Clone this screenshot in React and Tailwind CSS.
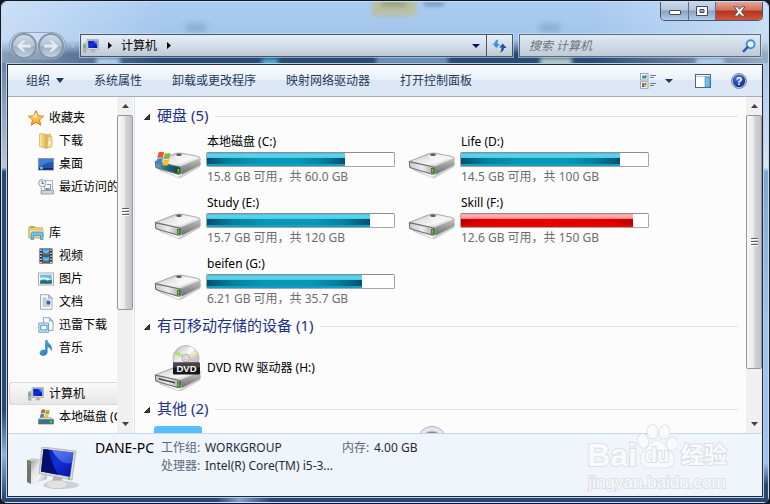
import React from "react";

function Defs() {
  return (
    <svg width="0" height="0" className="absolute" aria-hidden="true">
      <defs>
        <linearGradient id="metalTop" x1="0" y1="0" x2="1" y2="1">
          <stop offset="0" stopColor="#9a9a9a" />
          <stop offset=".35" stopColor="#e4e4e4" />
          <stop offset=".6" stopColor="#f4f4f4" />
          <stop offset="1" stopColor="#a0a0a0" />
        </linearGradient>
        <linearGradient id="metalSide" x1="0" y1="0" x2="0" y2="1">
          <stop offset="0" stopColor="#c4c4c4" />
          <stop offset="1" stopColor="#6c6c6c" />
        </linearGradient>
        <linearGradient id="metalFront" x1="0" y1="0" x2="1" y2="0">
          <stop offset="0" stopColor="#c9c9cf" />
          <stop offset=".5" stopColor="#ececf3" />
          <stop offset="1" stopColor="#a9a9a9" />
        </linearGradient>
        <linearGradient id="tealFront" x1="0" y1="0" x2="1" y2="0">
          <stop offset="0" stopColor="#7fa4b4" />
          <stop offset=".4" stopColor="#1f6f8b" />
          <stop offset="1" stopColor="#123f48" />
        </linearGradient>
        <linearGradient id="screenBlue" x1="0" y1="0" x2="1" y2="1">
          <stop offset="0" stopColor="#0a1fa0" />
          <stop offset=".5" stopColor="#1030d8" />
          <stop offset="1" stopColor="#0414a0" />
        </linearGradient>
        <linearGradient id="glare" x1="0" y1="0" x2="1" y2="1">
          <stop offset="0" stopColor="#7f9cf4" />
          <stop offset="1" stopColor="#2f55e0" />
        </linearGradient>
        <linearGradient id="folderGold" x1="0" y1="0" x2="1" y2="0">
          <stop offset="0" stopColor="#f8eaa4" />
          <stop offset="1" stopColor="#dfb64f" />
        </linearGradient>
        <linearGradient id="starGold" x1="0" y1="0" x2="0" y2="1">
          <stop offset="0" stopColor="#fff09a" />
          <stop offset="1" stopColor="#f79a1c" />
        </linearGradient>
        <linearGradient id="noteBlue" x1="0" y1="0" x2="1" y2="1">
          <stop offset="0" stopColor="#5cbcf4" />
          <stop offset="1" stopColor="#0f6cb4" />
        </linearGradient>
        <radialGradient id="helpBlue" cx=".4" cy=".3" r=".8">
          <stop offset="0" stopColor="#5c86e8" />
          <stop offset=".5" stopColor="#2348c0" />
          <stop offset="1" stopColor="#0a2480" />
        </radialGradient>
        <linearGradient id="disc" x1="0" y1="0" x2="1" y2="1">
          <stop offset="0" stopColor="#b8b8b8" />
          <stop offset=".4" stopColor="#efefef" />
          <stop offset=".7" stopColor="#c8c8c8" />
          <stop offset="1" stopColor="#dcdcdc" />
        </linearGradient>
      </defs>
    </svg>
  );
}

function FlagShapes() {
  return (
    <>
      <path d="M3 1C5 0 7 0 8.500 1L7.300 6.600C5.600 5.800 3.900 5.800 1.800 6.800Z" fill="#e2562c" />
      <path d="M9.300 1.400C11 2.300 13 2.200 15 1.300L13.900 7C12 7.800 10 7.800 8.200 7Z" fill="#83b93c" />
      <path d="M1.600 7.600C3.600 6.600 5.500 6.700 7.100 7.400L6 13C4.300 12.200 2.500 12.200 .4 13.200Z" fill="#3b86cf" />
      <path d="M8 7.900C9.700 8.700 11.700 8.700 13.700 7.800L12.600 13.400C10.700 14.300 8.700 14.200 6.900 13.400Z" fill="#f6c02c" />
    </>
  );
}

function DriveBody({ system, slot }) {
  return (
    <>
      <path d="M4 20L24 29L47 14L46 19L26 30.500L6 23Z" fill="#000" opacity=".18" />
      <path d="M1 13.500L20 6Q24 4.600 28 5.200L44 8.500Q47 9.500 46 11.500L28 18.500Q26 19.500 23.500 19L3 15Z" fill="url(#metalTop)" stroke="#8b8b8b" strokeWidth=".7" />
      <path d="M20 8.500C26 6 34 6.500 40 9C36 12 31 15 26 16C24 12.500 22 10 20 8.500Z" fill="#fff" opacity=".4" />
      <ellipse cx="25" cy="6.800" rx="2.800" ry="1.300" fill="#5a5a5a" />
      <path d="M27 18.500L46.500 10V17L27.500 26.500Z" fill="url(#metalSide)" />
      <path d="M1 13Q.6 12.500 1 15V18Q1 20 3 20.600L24 26.700Q27 27.300 27.500 25V20Q27 18.500 25 18.300L4 13.600Q2 13 1 13Z" fill="#6f6f6f" />
      <path d="M2 14.600L24.500 19.300Q26 19.700 26 21V24Q26 25.800 24 25.400L4 19.700Q2 19 2 17.500Z" fill={system ? "url(#tealFront)" : "url(#metalFront)"} />
      {slot && <path d="M4.500 16.400L21 20.600V22L4.500 17.900Z" fill="#3c3c3c" />}
      <path d="M23 20.200H25.800V25H23Z" fill="#1d5a10" />
      <path d="M23.600 20.800H25.200V24.600H23.600Z" fill="#56dc1c" />
    </>
  );
}

function DriveIcon({ system }) {
  return (
    <svg width="48" height="32" viewBox="0 0 48 32" className="shrink-0" aria-hidden="true">
      <DriveBody system={system} />
      {system && (
        <g transform="translate(1.500 3.500)">
          <FlagShapes />
        </g>
      )}
    </svg>
  );
}

function DvdIcon() {
  return (
    <svg width="48" height="46" viewBox="0 0 48 46" className="shrink-0" aria-hidden="true">
      <g transform="translate(0 16.500)">
        <DriveBody slot />
      </g>
      <circle cx="32" cy="13.500" r="13" fill="url(#disc)" stroke="#a2a2a2" strokeWidth=".7" />
      <path d="M32 13.500L20 9L22.500 5Z" fill="#a4e05c" opacity=".8" />
      <path d="M32 13.500L41 4.500L44 9Z" fill="#f4e6b0" opacity=".8" />
      <path d="M32 13.500L36 1L41 4Z" fill="#fff" opacity=".7" />
      <path d="M32 13.500L44.500 15L44 18Z" fill="#f0a8d4" opacity=".8" />
      <circle cx="32" cy="13" r="4" fill="#dcdcdc" stroke="#aaa" strokeWidth=".8" />
      <circle cx="32" cy="13" r="1.500" fill="#fff" stroke="#999" strokeWidth=".5" />
      <rect x="19" y="17.500" width="27" height="12" rx="1" fill="#161616" />
      <rect x="19" y="17.500" width="27" height="5" fill="#5a5a5a" opacity=".7" />
      <text x="32.500" y="27" textAnchor="middle" fontSize="9.500" fontWeight="700" fontFamily="Liberation Sans, sans-serif" fill="#fff">DVD</text>
    </svg>
  );
}

function Svg16({ children }) {
  return (
    <svg width="16" height="16" viewBox="0 0 16 16" className="shrink-0" aria-hidden="true">
      {children}
    </svg>
  );
}

function ComputerIcon() {
  return (
    <Svg16>
      <path d="M.5 6L3 5.500V14.500L.5 14Z" fill="#b6bcb8" stroke="#858c88" strokeWidth=".5" />
      <rect x=".8" y="7" width="1.400" height="3" fill="#4cc030" />
      <path d="M4 1.500H15.500V11.500H4Z" fill="#d8d8d8" stroke="#9a9a9a" strokeWidth=".6" />
      <path d="M5.200 2.700H14.300V10H5.200Z" fill="url(#screenBlue)" />
      <path d="M10 2.700H14.300V7Z" fill="#6c8cf0" />
      <path d="M8.500 11.500H11.500V13L13.500 14.300H6.500L8.500 13Z" fill="#b0b0b0" />
    </Svg16>
  );
}
function StarIcon() {
  return (
    <Svg16>
      <path d="M8 .7L10.200 5.700L15.600 6.200L11.500 9.800L12.800 15.200L8 12.400L3.200 15.200L4.500 9.800L.4 6.200L5.800 5.700Z" fill="url(#starGold)" stroke="#e2791c" strokeWidth="1" strokeLinejoin="round" />
      <path d="M8 3L9.200 6.500L7 7.500L4 7Z" fill="#fff" opacity=".5" />
    </Svg16>
  );
}
function FolderIcon() {
  return (
    <Svg16>
      <path d="M7 2L12.500 1V14L7 15Z" fill="#e5c568" stroke="#c29b3e" strokeWidth=".5" />
      <path d="M9.500 4L14 3.500V13.500L9 15Z" fill="#f2dc8e" stroke="#c9a349" strokeWidth=".5" />
      <path d="M1.500 1L5 .6L8.500 2V15.500L1.500 13.500Z" fill="url(#folderGold)" stroke="#c9a349" strokeWidth=".6" />
      <path d="M10.500 8.500H12.500V11.500H10.500Z" fill="#fff" opacity=".8" />
    </Svg16>
  );
}
function DesktopIcon() {
  return (
    <Svg16>
      <rect x=".5" y="2.500" width="15" height="11.500" fill="#1b58b0" stroke="#8a94a0" />
      <path d="M1 3H15V6C10 6 6 8 1 11Z" fill="#3f80d6" />
      <rect x="1" y="12" width="14" height="1.800" fill="#142e60" />
      <circle cx="3.500" cy="12" r="1.600" fill="#58b8e8" />
      <circle cx="3.500" cy="12" r=".7" fill="#f5d040" />
    </Svg16>
  );
}
function RecentIcon() {
  return (
    <Svg16>
      <path d="M6.500 1.500H14.500V13H6.500Z" fill="#f3f5f7" stroke="#9ba1a8" strokeWidth=".8" />
      <path d="M7.500 9H11.500V12H7.500Z" fill="#6795c4" />
      <path d="M12.500 5V11M9 5.500H12" stroke="#8a98a8" />
      <path d="M3 11.500H15.500V15H3Z" fill="#d2d5d8" stroke="#8e9498" strokeWidth=".8" />
      <circle cx="4.200" cy="4.200" r="3.600" fill="#eef1f4" stroke="#9198a0" strokeWidth=".9" />
      <path d="M4.200 2V4.500H6" stroke="#4d5a68" fill="none" strokeWidth=".9" />
      <path d="M3 8.500Q3 12 5.500 12" stroke="#999" fill="none" />
    </Svg16>
  );
}
function LibraryIcon() {
  return (
    <Svg16>
      <path d="M.7 13V2.500L2 1.500H7L8 2.700H14.500V13Z" fill="#ecd27a" stroke="#c8a344" strokeWidth=".7" />
      <path d="M2 1.700H6.500V3H2Z" fill="#77b84c" />
      <path d="M1.500 5H15.300V12H1.500Z" fill="#f8e9ad" stroke="#cfae54" strokeWidth=".6" />
      <path d="M3 14.500V9Q3 7 5 7H13Q15 7 15 9V14.500H12.500V10.500H5.500V14.500Z" fill="#72c2ea" stroke="#2f8abc" strokeWidth=".7" />
    </Svg16>
  );
}
function VideoIcon() {
  return (
    <Svg16>
      <rect x="1.500" y=".5" width="13" height="15" fill="#22262c" />
      <rect x="4.500" y="1" width="7" height="6.500" fill="#3a9ed8" />
      <rect x="4.500" y="8.500" width="7" height="6.500" fill="#3a9ed8" />
      <path d="M4.500 6Q7 5 9 6L11.500 5V7.500H4.500ZM4.500 13.500Q7 12.500 9 13.500L11.500 12.500V15H4.500Z" fill="#8a4a3c" />
      <path d="M5 2L8 4.500L11 2M5 9.500L8 12L11 9.500" stroke="#8fdcfa" fill="none" />
      <path d="M3 1.500V15M13 1.500V15" stroke="#fff" strokeWidth="1.400" strokeDasharray="1.500 1.500" />
    </Svg16>
  );
}
function PictureIcon() {
  return (
    <Svg16>
      <rect x=".6" y="2" width="14.800" height="12" fill="#fff" stroke="#8d9399" strokeWidth=".8" />
      <rect x="2.200" y="3.600" width="11.600" height="8.800" fill="#6bbbe8" />
      <path d="M2.200 7Q6 5 13.800 8.500V10H2.200Z" fill="#d9f1f6" />
      <path d="M2.200 9.500Q6 7.500 9 9.500L13.800 8.500V12.400H2.200Z" fill="#2e8552" />
      <path d="M2.200 11Q8 9.800 13.800 11V12.400H2.200Z" fill="#2060a0" />
    </Svg16>
  );
}
function DocumentIcon() {
  return (
    <Svg16>
      <path d="M2.500 .7H10.500L14 4.200V15.300H2.500Z" fill="#fcfdff" stroke="#8a929c" strokeWidth=".8" />
      <path d="M10.500 .7V4.200H14Z" fill="#d6dde6" stroke="#8a929c" strokeWidth=".7" />
      <path d="M4.500 4H8.500M4.500 6H12M4.500 8H8M4.500 10H8M4.500 12H12" stroke="#8595ad" strokeWidth=".9" />
      <rect x="8.500" y="7" width="3.800" height="3.600" fill="#2b62b6" />
    </Svg16>
  );
}
function ThunderDownloadIcon() {
  return (
    <Svg16>
      <path d="M5.500 .7H11.500L15 4.200V13.500H5.500Z" fill="#f5fafe" stroke="#7f93a6" strokeWidth=".8" />
      <path d="M11.500 .7V4.200H15Z" fill="#cfe0ee" stroke="#7f93a6" strokeWidth=".7" />
      <path d="M.8 6H10.500V15.300H.8Z" fill="#d6ebfa" stroke="#5b9bce" strokeWidth=".9" />
      <path d="M2.800 8.200H9V13H2.800Z" fill="#fff" stroke="#3f8bc8" />
    </Svg16>
  );
}
function MusicIcon() {
  return (
    <Svg16>
      <path d="M7.500 .5H9.200C9.500 4 14.500 4.500 13.500 10.500C12.500 8 11 7 9.200 6.800V12C9.200 14.500 6.800 15.700 4.500 15.500C2 15.200 1.200 13.200 2.500 11.500C3.700 10 5.800 9.700 7.500 10.500Z" fill="url(#noteBlue)" stroke="#1a6dad" strokeWidth=".5" />
    </Svg16>
  );
}
function SystemDiskIcon() {
  return (
    <Svg16>
      <path d="M.5 10.500L2.500 8.500H13.500L15.500 10.500V15H.5Z" fill="#3d7484" stroke="#66707a" strokeWidth=".7" />
      <path d="M.7 10.300L2.700 8.300H13.300L15.300 10.300Z" fill="#d7dadc" />
      <rect x="12" y="11.800" width="2" height="2" fill="#58e028" />
      <g transform="translate(1.500 0) scale(.68)">
        <FlagShapes />
      </g>
    </Svg16>
  );
}

function LargeComputerIcon() {
  return (
    <svg width="52" height="44" viewBox="0 0 52 44" className="shrink-0" aria-hidden="true">
      <ellipse cx="34" cy="38" rx="18" ry="4" fill="#000" opacity=".14" />
      <path d="M0 13L5 11L20 13V32L5 37L0 35Z" fill="#cfcfcf" />
      <path d="M0 13L4 14V37L0 35Z" fill="#6f7472" />
      <path d="M4 14L20 12V32L4 37Z" fill="url(#metalTop)" />
      <path d="M1.300 15L2.800 15.500V18L1.300 17.500Z" fill="#4bc22c" />
      <path d="M27 28L35 30L36 37H24Z" fill="#b4b4b4" />
      <ellipse cx="30" cy="37.500" rx="11" ry="4.200" fill="#e2e2e2" stroke="#b8b8b8" strokeWidth=".6" />
      <path d="M15 0L49 4L45 33L12 26.500Z" fill="#dadada" stroke="#a5a5a5" strokeWidth=".7" />
      <path d="M16.500 2L46.500 5.500L43 30L14 24.500Z" fill="url(#screenBlue)" />
      <path d="M16.500 2L22 2.700C23 10 26 19 31 27.700L14 24.500Z" fill="#060e70" />
      <path d="M25 3L46.500 5.500L45 16C38 18 31 14 25 3Z" fill="url(#glare)" opacity=".75" />
      <circle cx="42" cy="31.500" r=".9" fill="#3cc030" />
    </svg>
  );
}

function Triangle({ className, dir = "down", w = 8, h = 4 }) {
  const points =
    dir === "down" ? `0,0 ${w},0 ${w / 2},${h}` : dir === "up" ? `0,${h} ${w},${h} ${w / 2},0` : `0,0 ${w},${h / 2} 0,${h}`;
  return (
    <svg width={w} height={h} viewBox={`0 0 ${w} ${h}`} className={className} aria-hidden="true">
      <polygon points={points} fill="currentColor" />
    </svg>
  );
}

function NavArrow({ flip }) {
  return (
    <svg width="18" height="18" viewBox="0 0 18 18" className={flip ? "rotate-180" : ""} aria-hidden="true">
      <path d="M1.500 9L8 3H11L7.500 7.300H16V10.700H7.500L11 15H8Z" fill="#e6edf4" stroke="#b4c2d0" strokeWidth=".6" />
    </svg>
  );
}

function TitleBar() {
  const base = "flex h-[18px] items-center justify-center";
  const round =
    "flex size-[26px] items-center justify-center rounded-full border-2 border-[#8595a9] bg-[linear-gradient(180deg,#cfdbe8_0%,#b3c2d2_48%,#9dafc3_52%,#c2d0df_100%)]";
  return (
    <header className="relative flex h-[61px] flex-col overflow-hidden rounded-t-[5px] bg-[linear-gradient(180deg,#abcdf2_0px,#a2c4ea_38px,#5c82ac_46px,#25476f_52px,#2a4d76_61px)]">
      <div aria-hidden="true" className="absolute inset-y-0 left-0 w-40 bg-[linear-gradient(90deg,rgba(235,243,252,0.5),rgba(235,243,252,0))]" />
      <div aria-hidden="true" className="absolute inset-y-0 right-0 w-44 bg-[linear-gradient(270deg,rgba(226,237,250,0.6),rgba(226,237,250,0))]" />
      <i aria-hidden="true" className="absolute top-[22px] left-[184px] h-2 w-5 bg-[#6e8fb5]/50 blur-[3px]" />
      <i aria-hidden="true" className="absolute top-[22px] left-[538px] h-2 w-5 bg-[#6e8fb5]/50 blur-[3px]" />
      <i aria-hidden="true" className="absolute -top-1 left-[370px] h-[18px] w-[44px] bg-[#b9bfa2] blur-[2px]" />
      <i aria-hidden="true" className="absolute top-0 left-[380px] h-1 w-6 bg-[#8f9b72] blur-[2px]" />
      <i aria-hidden="true" className="absolute top-0 left-[422px] h-1 w-5 bg-[#6e8fb5] blur-[2px]" />
      <i aria-hidden="true" className="absolute top-[56px] left-[94px] h-2 w-6 bg-[#b0d0f4] blur-[2px]" />
      <i aria-hidden="true" className="absolute top-[57px] left-[260px] h-2 w-4 bg-[#4fb4dc] blur-[2px]" />
      <i aria-hidden="true" className="absolute top-[53px] left-[374px] h-3 w-[72px] bg-[#6a90bd] blur-[2px]" />
      <i aria-hidden="true" className="absolute top-[56px] left-[538px] h-2 w-8 bg-[#b6cfc4] blur-[2px]" />
      <i aria-hidden="true" className="absolute top-[56px] left-[694px] h-2 w-7 bg-[#b0d0f4] blur-[2px]" />

      <div className="relative flex justify-end pr-[5px]">
        <div className="flex overflow-hidden rounded-b-[5px] border-x border-b border-[#44546c] text-[#3f4a5c]">
          <button type="button" aria-label="最小化" className={`${base} w-7 border-r border-[#5c6c84] bg-[linear-gradient(180deg,#c8d8ec_0%,#b4c6dd_45%,#8ba1bf_50%,#b4cbe8_100%)]`}>
            <svg width="12" height="6" viewBox="0 0 12 6" className="mt-1" aria-hidden="true">
              <rect x=".5" y=".5" width="11" height="4" rx=".5" fill="#fff" stroke="currentColor" />
            </svg>
          </button>
          <button type="button" aria-label="最大化" className={`${base} w-[27px] border-r border-[#5c6c84] bg-[linear-gradient(180deg,#c8d8ec_0%,#b4c6dd_45%,#8ba1bf_50%,#b4cbe8_100%)]`}>
            <svg width="12" height="10" viewBox="0 0 12 10" aria-hidden="true">
              <path fillRule="evenodd" d="M.5 .5H11.500V9.500H.5ZM4 3.500V6.500H8V3.500Z" fill="#fff" stroke="currentColor" />
            </svg>
          </button>
          <button type="button" aria-label="关闭" className={`${base} w-[46px] bg-[linear-gradient(180deg,#e2a596_0%,#d2705c_45%,#b5331c_50%,#d0583c_100%)]`}>
            <svg width="13" height="11" viewBox="0 0 13 11" aria-hidden="true">
              <path d="M1 .8H4.300L6.500 3.300L8.700 .8H12L8.300 5.500L12 10.200H8.700L6.500 7.700L4.300 10.200H1L4.700 5.500Z" fill="#fff" stroke="currentColor" strokeWidth=".9" />
            </svg>
          </button>
        </div>
      </div>

      <div className="relative mt-[13px] flex h-[23px] items-center gap-[3px] pr-[7px] pl-[7px]">
        <div className="flex items-center gap-px rounded-full border border-[#7d8fa6]/70 bg-white/20 px-px">
          <button type="button" aria-label="后退" className={round}>
            <NavArrow />
          </button>
          <button type="button" aria-label="前进" className={round}>
            <NavArrow flip />
          </button>
        </div>
        <button type="button" aria-label="最近页面" className="flex h-5 w-2 items-center justify-center text-[#a9bdd3]">
          <Triangle w={8} h={5} />
        </button>
        <div className="flex h-[23px] min-w-0 flex-1 border border-[#46566a] bg-[linear-gradient(180deg,#e6eef6_0%,#d5dfe9_50%,#bdc7d2_100%)] shadow-[0_0_0_1px_rgba(220,232,245,0.55)]">
          <div className="flex flex-1 items-center pl-0.5">
            <ComputerIcon />
            <button type="button" aria-label="展开" className="flex w-[22px] justify-center">
              <Triangle dir="right" w={4} h={7} />
            </button>
            <button type="button">计算机</button>
            <button type="button" aria-label="展开计算机" className="flex w-6 justify-center">
              <Triangle dir="right" w={4} h={7} />
            </button>
          </div>
          <button type="button" aria-label="历史记录" className="flex w-5 items-center justify-center text-[#0a1060]">
            <Triangle w={8} h={4} />
          </button>
          <button type="button" aria-label="刷新" className="flex w-[26px] items-center justify-center border-l border-[#46566a]">
            <svg width="15" height="14" viewBox="0 0 15 14" aria-hidden="true">
              <path d="M6.500 .5C4 .8 2.700 2.500 2.700 4.500H.3L4.300 9L8 5H5.700C5.700 3 5.800 1.800 6.500 .5Z" fill="#3f93d8" />
              <path d="M8 13.500C10.500 13.200 12 11.500 12 9H14.700L10.800 4.500L7.100 8.500H9.300C9.300 11 9 12.300 8 13.500Z" fill="#2556a4" />
            </svg>
          </button>
        </div>
        <label className="ml-[3px] flex h-[23px] w-[242px] shrink-0 items-center border border-[#5c6b7e] bg-[linear-gradient(180deg,#dfe9f4_0%,#d0dbe6_50%,#bfcad6_100%)] pr-1 pl-[9px] shadow-[0_0_0_1px_rgba(220,232,245,0.55)]">
          <input type="search" aria-label="搜索 计算机" placeholder="搜索 计算机" className="min-w-0 flex-1 bg-transparent italic outline-none placeholder:text-[#6c7178]" />
          <svg width="14" height="14" viewBox="0 0 14 14" aria-hidden="true">
            <circle cx="8.600" cy="5.200" r="4" fill="#e4f1fb" stroke="#3f93d2" strokeWidth="1.900" />
            <path d="M5.600 8.200L1.700 12.200" stroke="#2a5cae" strokeWidth="2.400" strokeLinecap="round" />
          </svg>
        </label>
      </div>
    </header>
  );
}

function CommandBar() {
  return (
    <div className="flex h-8 shrink-0 items-center border-b border-[#a0afc3] bg-[linear-gradient(180deg,#fbfdff_0%,#e8f0fa_48%,#dce6f4_50%,#dde8f6_100%)] pr-[15px] pl-[18px] text-[#1e395b]">
      <nav aria-label="命令" className="flex flex-1 gap-[30px]">
        <button type="button" className="flex items-center gap-1.5">
          组织
          <Triangle w={8} h={5} />
        </button>
        <button type="button">系统属性</button>
        <button type="button">卸载或更改程序</button>
        <button type="button">映射网络驱动器</button>
        <button type="button">打开控制面板</button>
      </nav>
      <button type="button" aria-label="更改视图">
        <svg width="16" height="16" viewBox="0 0 16 16" aria-hidden="true">
          <rect x=".5" y=".5" width="7.500" height="6.500" fill="#fff" stroke="#9aa3ad" />
          <rect x="2" y="2" width="4.500" height="3.500" fill="#2a8f9a" />
          <path d="M2 2H6.500L2 4Z" fill="#7fd0e8" />
          <rect x=".5" y="8.800" width="7.500" height="6.500" fill="#fff" stroke="#9aa3ad" />
          <rect x="2" y="10.200" width="2.200" height="2" fill="#d8402a" />
          <rect x="4.200" y="10.200" width="2.300" height="2" fill="#3c9a3c" />
          <rect x="2" y="12.200" width="2.200" height="1.800" fill="#2b5cc0" />
          <rect x="4.200" y="12.200" width="2.300" height="1.800" fill="#e8b82a" />
          <path d="M10 2.500H16M10 4.500H14M10 10.500H16M10 12.500H14" stroke="#6c7f9a" />
        </svg>
      </button>
      <button type="button" aria-label="更多选项" className="ml-[9px]">
        <Triangle w={8} h={4} />
      </button>
      <button type="button" aria-label="显示预览窗格" className="ml-[22px]">
        <svg width="16" height="14" viewBox="0 0 16 14" aria-hidden="true">
          <rect x=".5" y=".5" width="15" height="13" fill="#fff" stroke="#4c6484" />
          <path d="M1 2.500H15" stroke="#b9c7d8" />
          <rect x="10" y="3" width="5" height="10" fill="#6cc0e2" stroke="#4a84a8" strokeWidth=".6" />
        </svg>
      </button>
      <button type="button" aria-label="获取帮助" className="ml-5">
        <svg width="16" height="16" viewBox="0 0 16 16" aria-hidden="true">
          <circle cx="8" cy="8" r="7.500" fill="#c9cdd4" stroke="#767f8c" strokeWidth=".9" />
          <circle cx="8" cy="8" r="6.200" fill="url(#helpBlue)" />
          <text x="8" y="12" textAnchor="middle" fontSize="11" fontWeight="700" fontFamily="Liberation Sans, sans-serif" fill="#fff">?</text>
        </svg>
      </button>
    </div>
  );
}

const favorites = [
  ["下载", FolderIcon],
  ["桌面", DesktopIcon],
  ["最近访问的位置", RecentIcon],
];
const libraries = [
  ["视频", VideoIcon],
  ["图片", PictureIcon],
  ["文档", DocumentIcon],
  ["迅雷下载", ThunderDownloadIcon],
  ["音乐", MusicIcon],
];
const disks = [["本地磁盘 (C:)", SystemDiskIcon]];

function TreeGroup({ label, icon: Icon, items, selected }) {
  return (
    <li>
      <a href="#" className={`ml-px flex h-[23px] items-center gap-[5px] border pl-[18px] ${selected ? "rounded-l-[3px] border-r-0 border-[#d9d9d9] bg-[linear-gradient(180deg,#fafafa,#e6e6e6)]" : "border-transparent"}`}>
        <Icon />
        {label}
      </a>
      <ul>
        {items.map(([name, ItemIcon]) => (
          <li key={name}>
            <a href="#" className="flex h-[23px] items-center gap-[5px] pl-[30px]">
              <ItemIcon />
              {name}
            </a>
          </li>
        ))}
      </ul>
    </li>
  );
}

function Scrollbar({ thumb, rest }) {
  return (
    <div aria-hidden="true" className="flex w-4 shrink-0 flex-col bg-[#f0f0f0] text-[#404040]">
      <div className="flex h-[18px] shrink-0 items-center justify-center">
        <Triangle dir="up" w={7} h={4} />
      </div>
      <div className="flex items-center justify-center rounded-[2px] border border-[#979797] bg-[linear-gradient(90deg,#f7f7f7_0%,#ebebeb_45%,#d4d4d7_55%,#c2c3c7_100%)]" style={{ flexGrow: thumb, flexBasis: 0 }}>
        <div className="flex flex-col gap-px">
          <i className="h-0.5 w-[7px] border-b border-white bg-[#606060]" />
          <i className="h-0.5 w-[7px] border-b border-white bg-[#606060]" />
          <i className="h-0.5 w-[7px] border-b border-white bg-[#606060]" />
        </div>
      </div>
      <div style={{ flexGrow: rest, flexBasis: 0 }} />
      <div className="flex h-[18px] shrink-0 items-center justify-center">
        <Triangle w={7} h={4} />
      </div>
    </div>
  );
}

function Sidebar() {
  return (
    <aside className="flex w-[127px] shrink-0 border-r border-[#d6e5f5]">
      <nav aria-label="导航窗格" className="min-w-0 flex-1 overflow-hidden whitespace-nowrap">
        <ul className="flex flex-col gap-[23px] pt-[9px]">
          <TreeGroup label="收藏夹" icon={StarIcon} items={favorites} />
          <TreeGroup label="库" icon={LibraryIcon} items={libraries} />
          <TreeGroup label="计算机" icon={ComputerIcon} items={disks} selected />
        </ul>
      </nav>
      <Scrollbar thumb={194} rest={106} />
      <div className="w-px bg-[#fcfcfc]" />
    </aside>
  );
}

const drives = [
  { name: "本地磁盘 (C:)", detail: "15.8 GB 可用，共 60.0 GB", used: 74, system: true },
  { name: "Life (D:)", detail: "14.5 GB 可用，共 100 GB", used: 85 },
  { name: "Study (E:)", detail: "15.7 GB 可用，共 120 GB", used: 87 },
  { name: "Skill (F:)", detail: "12.6 GB 可用，共 150 GB", used: 92, full: true },
  { name: "beifen (G:)", detail: "6.21 GB 可用，共 35.7 GB", used: 83 },
];

function SectionHeading({ children }) {
  return (
    <h2 className="flex h-[27px] items-center gap-[7px] text-[15px] text-[#1e3287]">
      <svg width="6" height="6" viewBox="0 0 6 6" aria-hidden="true">
        <path d="M5.500 .5V5.500H.5Z" fill="#404040" stroke="#262626" />
      </svg>
      <span className="pb-[3px]">{children}</span>
      <span className="h-px flex-1 bg-[#e0e2e4]" />
    </h2>
  );
}

function Drive({ name, detail, used, system, full }) {
  return (
    <li className="flex h-[61px] gap-1 pt-1 pl-2.5">
      <div className="pt-3.5">
        <DriveIcon system={system} />
      </div>
      <div className="w-[189px] leading-4">
        <div className="px-px text-black">{name}</div>
        <div role="progressbar" aria-label={name} aria-valuenow={used} className="my-0.5 h-[15px] rounded-[2px] border border-[#a6a6a6] border-t-[#8d8d8d] bg-white">
          <div className="flex h-full flex-col" style={{ width: `${used}%` }}>
            <div
              className={
                full
                  ? "h-[5px] bg-[linear-gradient(180deg,#ff9c9c,#fdb4b4_40%,#f87c7c)]"
                  : "h-[5px] bg-[linear-gradient(180deg,#3fbcdc,#5fd6ef_40%,#50c6e2)]"
              }
            />
            <div
              className={
                full
                  ? "flex-1 bg-[linear-gradient(90deg,#b80000_0%,#dc0000_12%,#e60000_50%,#dc0000_88%,#b80000_100%)]"
                  : "flex-1 bg-[linear-gradient(90deg,#04506c_0%,#0480a0_16%,#069ab8_40%,#069ab8_65%,#0480a0_84%,#04506c_100%)]"
              }
            />
            <div className={full ? "h-0.5 bg-[#f00000]" : "h-0.5 bg-[#12a0be]"} />
          </div>
        </div>
        <div className="px-px text-[#6d6d6d]">{detail}</div>
      </div>
    </li>
  );
}

function Content() {
  return (
    <main className="min-w-0 flex-1 overflow-hidden pt-1.5 pr-2 pl-[9px]">
      <SectionHeading>硬盘 (5)</SectionHeading>
      <ul className="grid grid-cols-[repeat(auto-fill,254px)]">
        {drives.map((drive) => (
          <Drive key={drive.name} {...drive} />
        ))}
      </ul>
      <SectionHeading>有可移动存储的设备 (1)</SectionHeading>
      <div className="flex h-14 items-center gap-[5px] pl-2.5 text-black">
        <DvdIcon />
        DVD RW 驱动器 (H:)
      </div>
      <SectionHeading>其他 (2)</SectionHeading>
      <div className="grid grid-cols-[repeat(auto-fill,254px)] pt-[3px] pl-2.5">
        <div className="size-12 rounded-[3px] bg-[#58bfff]" />
        <svg width="48" height="48" viewBox="0 0 48 48" aria-hidden="true">
          <circle cx="24" cy="15" r="14.500" fill="#e4e9ef" stroke="#a9b5c3" />
          <circle cx="24" cy="16" r="11" fill="#7c8aa2" stroke="#c2cbd6" />
        </svg>
      </div>
    </main>
  );
}

function Watermark() {
  return (
    <div className="absolute right-[42px] bottom-2.5 flex flex-col items-center font-['Liberation_Sans','Noto_Sans_CJK_SC',sans-serif] text-[#f9fafc] [paint-order:stroke_fill] [-webkit-text-stroke:2px_#dcdfe5]">
      <div className="flex items-end">
        <span className="text-[32px] leading-9 font-bold">Bai</span>
        <div className="relative flex w-10 justify-center">
          <svg width="40" height="46" viewBox="0 0 40 46" className="absolute bottom-1 left-0" aria-hidden="true">
            <g fill="#f9fafc" stroke="#dcdfe5" strokeWidth="1.500">
              <ellipse cx="6" cy="18" rx="5" ry="7" transform="rotate(-12 6 18)" />
              <ellipse cx="15.500" cy="8.500" rx="5" ry="7" />
              <ellipse cx="27.500" cy="9" rx="5" ry="7" transform="rotate(12 27.500 9)" />
              <ellipse cx="35" cy="21" rx="5" ry="6.500" transform="rotate(16 35 21)" />
              <path d="M20 18C14 18 12 24 7.500 28C2 33 3.500 44 11 44.500H29C38 44.500 39 34 33 28.500C28 24 26 18 20 18Z" />
            </g>
          </svg>
          <span className="relative text-[20px] leading-9 font-bold">du</span>
        </div>
        <span className="ml-1 text-[23px] leading-9 font-bold">经验</span>
      </div>
      <span className="text-[17px] leading-5">jingyan.baidu.com</span>
    </div>
  );
}

function DetailsPane() {
  return (
    <footer className="flex h-[63px] shrink-0 border-t border-[#c6d7ea] bg-[#f0f4fb] pt-[5px] pl-[19px] leading-[18px]">
      <div className="pt-2">
        <LargeComputerIcon />
      </div>
      <div className="ml-4 w-[66px] text-[14px] text-black">DANE-PC</div>
      <dl className="grid grid-cols-[44px_137px_32px_auto] content-start text-[#1e2c40] [&>dt]:text-[#5a6779]">
        <dt>工作组:</dt>
        <dd>WORKGROUP</dd>
        <dt>内存:</dt>
        <dd>4.00 GB</dd>
        <dt>处理器:</dt>
        <dd>Intel(R) Core(TM) i5-3...</dd>
      </dl>
    </footer>
  );
}

export default function App() {
  return (
    <div className="h-screen bg-[#14181f] font-['Noto_Sans','Noto_Sans_CJK_SC',sans-serif] text-[12px] leading-4 text-black">
      <Defs />
      <div className="relative flex h-full flex-col rounded-[7px] border border-[#14181f] bg-[#264970]">
        <div className="flex min-h-0 flex-1 flex-col rounded-[6px] border border-[#c6dcf2]">
          <TitleBar />
          <div className="flex min-h-0 flex-1">
            <div className="w-1 shrink-0 bg-[linear-gradient(180deg,#6d86a4_0%,#b9c8da_24%,#29496f_25%,#29496f_80%,#8db4dd_90%,#264970_100%)]" />
            <div className="flex min-w-0 flex-1 flex-col border border-[#b8cde4]">
              <div className="flex min-h-0 flex-1 flex-col border border-[#1c2b40] bg-[#fcfcfc]">
                <CommandBar />
                <div className="flex min-h-0 flex-1">
                  <Sidebar />
                  <Content />
                  <Scrollbar thumb={254} rest={46} />
                </div>
                <DetailsPane />
              </div>
            </div>
            <div className="w-1 shrink-0 bg-[linear-gradient(180deg,#a9c6e8_0%,#d9e6f5_24%,#7ea6d4_25%,#9cc4ee_60%,#9cc4ee_92%,#264970_97%)]" />
          </div>
          <div className="h-1 shrink-0 bg-[linear-gradient(90deg,#264970_0%,#264970_28%,#7ea2c8_31%,#264970_35%,#264970_100%)]" />
        </div>
        <Watermark />
      </div>
    </div>
  );
}
